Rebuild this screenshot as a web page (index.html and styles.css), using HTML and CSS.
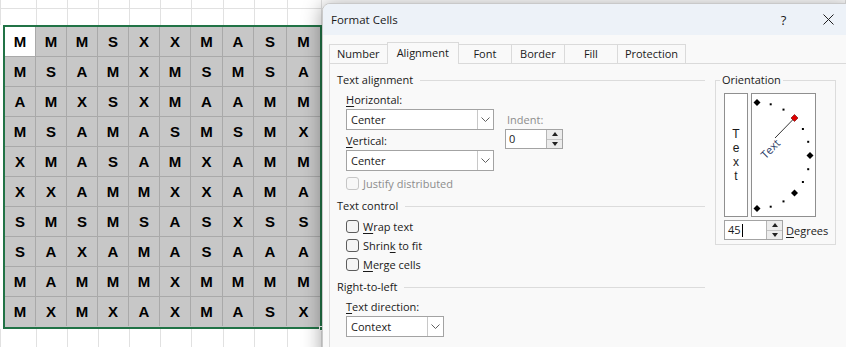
FILE: index.html
```html
<!DOCTYPE html>
<html lang="en">
<head>
    <meta charset="UTF-8">
    <title>Format Cells</title>
    <link rel="stylesheet" href="styles.css">
</head>
<body>
<!--sheet behind the dialog-->
<div id="sheet">
    <!--rows above the range-->
    <div class="sheet_cols sheet_top">
        <span></span><span></span><span></span><span></span><span></span><span></span>
        <span></span><span></span><span></span><span></span><span></span>
    </div>
    <!--selected range-->
    <div id="range">
        <span class="active">M</span><span>M</span><span>M</span><span>S</span><span>X</span><span>X</span><span>M</span><span>A</span><span>S</span><span>M</span>
        <span>M</span><span>S</span><span>A</span><span>M</span><span>X</span><span>M</span><span>S</span><span>M</span><span>S</span><span>A</span>
        <span>A</span><span>M</span><span>X</span><span>S</span><span>X</span><span>M</span><span>A</span><span>A</span><span>M</span><span>M</span>
        <span>M</span><span>S</span><span>A</span><span>M</span><span>A</span><span>S</span><span>M</span><span>S</span><span>M</span><span>X</span>
        <span>X</span><span>M</span><span>A</span><span>S</span><span>A</span><span>M</span><span>X</span><span>A</span><span>M</span><span>M</span>
        <span>X</span><span>X</span><span>A</span><span>M</span><span>M</span><span>X</span><span>X</span><span>A</span><span>M</span><span>A</span>
        <span>S</span><span>M</span><span>S</span><span>M</span><span>S</span><span>A</span><span>S</span><span>X</span><span>S</span><span>S</span>
        <span>S</span><span>A</span><span>X</span><span>A</span><span>M</span><span>A</span><span>S</span><span>A</span><span>A</span><span>A</span>
        <span>M</span><span>A</span><span>M</span><span>M</span><span>M</span><span>X</span><span>M</span><span>M</span><span>M</span><span>M</span>
        <span>M</span><span>X</span><span>M</span><span>X</span><span>A</span><span>X</span><span>M</span><span>A</span><span>S</span><span>X</span>
        <i class="fill_handle"></i>
    </div>
    <!--rows below the range-->
    <div class="sheet_cols sheet_bottom">
        <span></span><span></span><span></span><span></span><span></span><span></span>
        <span></span><span></span><span></span><span></span><span></span>
    </div>
</div>

<!--Format Cells dialog-->
<div id="dialog">
    <div class="dialog_title">
        <span class="title_text">Format Cells</span>
        <span class="title_btn">?</span>
        <span class="title_btn">
            <svg width="11" height="11" viewBox="0 0 11 11"><path d="M0.5 0.5 L10.5 10.5 M10.5 0.5 L0.5 10.5" stroke="#1f1f1f" stroke-width="1"/></svg>
        </span>
    </div>

    <!--tabs-->
    <div class="tabs">
        <span class="tab">Number</span>
        <span class="tab current">Alignment</span>
        <span class="tab">Font</span>
        <span class="tab">Border</span>
        <span class="tab">Fill</span>
        <span class="tab">Protection</span>
    </div>

    <div class="panel">
        <!--left column-->
        <div class="left_col">
            <div class="group_head">Text alignment</div>
            <div class="align_row">
                <div class="align_main">
                    <div class="label"><u>H</u>orizontal:</div>
                    <div class="combo combo_wide">
                        <span class="combo_text">Center</span>
                        <span class="combo_btn"><svg width="9" height="5" viewBox="0 0 9 5"><path d="M0.5 0.5 L4.5 4.5 L8.5 0.5" fill="none" stroke="#606060"/></svg></span>
                    </div>
                    <div class="label label_gap"><u>V</u>ertical:</div>
                    <div class="combo combo_wide">
                        <span class="combo_text">Center</span>
                        <span class="combo_btn"><svg width="9" height="5" viewBox="0 0 9 5"><path d="M0.5 0.5 L4.5 4.5 L8.5 0.5" fill="none" stroke="#606060"/></svg></span>
                    </div>
                </div>
                <div class="indent">
                    <div class="label disabled">Indent:</div>
                    <div class="spin spin_indent">
                        <span class="spin_text">0</span>
                        <span class="spin_btns"><i class="up"></i><i class="down"></i></span>
                    </div>
                </div>
            </div>
            <div class="check check_justify disabled"><i class="box"></i>Justify distributed</div>

            <div class="group_head group_gap">Text control</div>
            <div class="check check_first"><i class="box"></i><span><u>W</u>rap text</span></div>
            <div class="check"><i class="box"></i><span>Shrin<u>k</u> to fit</span></div>
            <div class="check"><i class="box"></i><span><u>M</u>erge cells</span></div>

            <div class="group_head group_gap">Right-to-left</div>
            <div class="label label_dir"><u>T</u>ext direction:</div>
            <div class="combo combo_dir">
                <span class="combo_text">Context</span>
                <span class="combo_btn"><svg width="9" height="5" viewBox="0 0 9 5"><path d="M0.5 0.5 L4.5 4.5 L8.5 0.5" fill="none" stroke="#606060"/></svg></span>
            </div>
        </div>

        <!--orientation-->
        <fieldset class="orientation">
            <legend>Orientation</legend>
            <div class="orient_boxes">
                <div class="vert_text">
                    <span>T</span><span>e</span><span>x</span><span>t</span>
                </div>
                <div class="dial">
                    <svg width="63" height="122" viewBox="0 0 63 122">
                        <polygon points="5,5 8.5,8.5 5,12 1.5,8.5" fill="#000"/>
                        <rect x="17.7" y="9.3" width="2" height="2" fill="#000"/>
                        <rect x="30.5" y="14.6" width="2" height="2" fill="#000"/>
                        <rect x="49.9" y="34" width="2" height="2" fill="#000"/>
                        <rect x="55.2" y="46.8" width="2" height="2" fill="#000"/>
                        <polygon points="58,58 61.5,61.5 58,65 54.5,61.5" fill="#000"/>
                        <rect x="55.2" y="74.2" width="2" height="2" fill="#000"/>
                        <rect x="49.9" y="87" width="2" height="2" fill="#000"/>
                        <polygon points="42.5,95.5 46,99 42.5,102.5 39,99" fill="#000"/>
                        <rect x="30.5" y="106.4" width="2" height="2" fill="#000"/>
                        <rect x="17.7" y="111.7" width="2" height="2" fill="#000"/>
                        <polygon points="5,111 8.5,114.5 5,118 1.5,114.5" fill="#000"/>
                        <line x1="42.5" y1="24" x2="23" y2="44" stroke="#000" stroke-width="0.8"/>
                        <polygon points="42.5,20.5 46,24 42.5,27.5 39,24" fill="#e00000" stroke="#600" stroke-width="0.6"/>
                        <text x="18" y="54.5" transform="rotate(-45 18 54.5)" text-anchor="middle" dominant-baseline="central" class="dial_text">Text</text>
                    </svg>
                </div>
            </div>
            <div class="degrees_row">
                <div class="spin spin_deg">
                    <span class="spin_text">45<i class="caret"></i></span>
                    <span class="spin_btns"><i class="up"></i><i class="down"></i></span>
                </div>
                <span class="deg_label"><u>D</u>egrees</span>
            </div>
        </fieldset>
    </div>
</div>
</body>
</html>
```

FILE: styles.css
```css
*{
    margin: 0;
    padding: 0;
    box-sizing: border-box;
}
body
{
    width: 846px;
    height: 347px;
    overflow: hidden;
    position: relative;
    background: #fff;
    font-family: "Open Sans", "Noto Sans", sans-serif;
    font-size: 11px;
    color: #1a1a1a;
}
u
{
    text-decoration: underline;
    text-underline-offset: 2px;
}

/* sheet */
#sheet
{
    height: 347px;
    display: flex;
    flex-direction: column;
}
.sheet_cols
{
    display: grid;
    grid-template-columns: 36px 31px 31px 31px 31px 31px 32px 31px 33px 34px 1fr;
    border-left: 1px solid #e1e1e1;
}
.sheet_cols span
{
    border-right: 1px solid #e1e1e1;
}
.sheet_top
{
    height: 25px;
    background: linear-gradient(#e1e1e1, #e1e1e1) 0 8px / 100% 1px no-repeat;
}
.sheet_bottom
{
    flex: 1;
}
#range
{
    position: relative;
    width: 319px;
    margin-left: 3px;
    border: 2px solid #217346;
    display: grid;
    grid-template-columns: 31px 31px 31px 31px 31px 31px 32px 31px 33px 33px;
    grid-auto-rows: 30px;
    background: #c7c7c7;
    font-family: "Liberation Sans", Arial, sans-serif;
    font-weight: bold;
    font-size: 15px;
    color: #000;
}
#range span
{
    display: flex;
    align-items: center;
    justify-content: center;
    border-right: 1px solid #a9a9a9;
    border-bottom: 1px solid #a9a9a9;
}
#range span:nth-child(10n)
{
    border-right: none;
}
#range span:nth-child(n+91)
{
    border-bottom: none;
    height: 29px;
}
#range .active
{
    background: #fff;
}
.fill_handle
{
    position: absolute;
    right: -4px;
    bottom: -4px;
    width: 5px;
    height: 5px;
    background: #217346;
    border: 1px solid #fff;
}

/* dialog */
#dialog
{
    position: absolute;
    left: 322px;
    top: 3px;
    width: 530px;
    height: 360px;
    background: #f9f9f9;
    border: 1px solid #c9c9c9;
    border-radius: 8px 0 0 0;
    box-shadow: 0 2px 20px rgba(0, 0, 0, 0.38);
    display: flex;
    flex-direction: column;
}
.dialog_title
{
    height: 31px;
    background: #edf2f8;
    border-radius: 7px 0 0 0;
    display: flex;
    align-items: center;
    padding-left: 8px;
    font-size: 11.5px;
}
.title_text
{
    flex: 1;
}
.title_btn
{
    width: 45px;
    height: 31px;
    display: flex;
    align-items: center;
    justify-content: center;
    font-size: 13px;
}
.tabs
{
    display: flex;
    align-items: flex-end;
    padding: 7px 0 0 6px;
    height: 28px;
}
.tab
{
    height: 19px;
    line-height: 17px;
    padding: 0 7px;
    min-width: 54px;
    text-align: center;
    border: 1px solid #dadada;
    border-bottom: none;
    margin-right: -1px;
    background: #f9f9f9;
}
.tab.current
{
    height: 22px;
    line-height: 19px;
    margin-bottom: -1px;
    position: relative;
    z-index: 1;
    padding: 0 9px;
}
.panel
{
    flex: 1;
    margin-left: 6px;
    border-top: 1px solid #dadada;
    border-left: 1px solid #dadada;
    padding: 8px 0 0 7px;
    display: flex;
    align-items: flex-start;
}
.left_col
{
    width: 368px;
    display: flex;
    flex-direction: column;
}
.group_head
{
    height: 16px;
    line-height: 16px;
    display: flex;
    align-items: center;
}
.group_head::after
{
    content: "";
    flex: 1;
    border-top: 1px solid #dcdcdc;
    margin-left: 7px;
}
.group_gap
{
    margin-top: 7px;
}
.label
{
    height: 16px;
    line-height: 16px;
    padding-left: 9px;
}
.label_gap
{
    margin-top: 3px;
}
.disabled
{
    color: #8d8d8d;
}
.align_row
{
    display: flex;
    margin-top: 4px;
}
.align_main
{
    display: flex;
    flex-direction: column;
}
.combo
{
    height: 21px;
    margin: 1px 0 0 9px;
    background: #fff;
    border: 1px solid #a3a3a3;
    display: flex;
}
.combo_wide
{
    width: 148px;
}
.combo_dir
{
    width: 98px;
}
.combo_text
{
    flex: 1;
    line-height: 19px;
    padding-left: 4px;
}
.combo_btn
{
    width: 16px;
    border-left: 1px solid #c8c8c8;
    display: flex;
    align-items: center;
    justify-content: center;
}
.indent
{
    margin-left: 11px;
    padding-top: 20px;
    display: flex;
    flex-direction: column;
}
.indent .label
{
    padding-left: 2px;
}
.spin
{
    height: 20px;
    background: #fff;
    border: 1px solid #a3a3a3;
    display: flex;
}
.spin_indent
{
    width: 58px;
    margin-top: 1px;
}
.spin_text
{
    flex: 1;
    line-height: 18px;
    padding-left: 3px;
    display: flex;
    align-items: center;
}
.spin_btns
{
    width: 16px;
    border-left: 1px solid #b5b5b5;
    background: #ececec;
    display: flex;
    flex-direction: column;
}
.spin_btns i
{
    flex: 1;
    display: flex;
    align-items: center;
    justify-content: center;
}
.spin_btns .up
{
    border-bottom: 1px solid #c4c4c4;
}
.spin_btns .up::after
{
    content: "";
    border-left: 3px solid transparent;
    border-right: 3px solid transparent;
    border-bottom: 4px solid #222;
}
.spin_btns .down::after
{
    content: "";
    border-left: 3px solid transparent;
    border-right: 3px solid transparent;
    border-top: 4px solid #222;
}
.caret
{
    width: 1px;
    height: 13px;
    background: #000;
    margin-left: 1px;
}
.check
{
    height: 16px;
    display: flex;
    align-items: center;
    padding-left: 9px;
    margin-top: 3px;
}
.check .box
{
    width: 13px;
    height: 13px;
    border: 1px solid #5c5c5c;
    border-radius: 3px;
    background: #f4f4f4;
    margin-right: 4px;
}
.check.disabled .box
{
    border-color: #c6c6c6;
    background: #f7f7f7;
}
.check_justify
{
    margin-top: 4px;
}
.check_first
{
    margin-top: 4px;
}
.label_dir
{
    margin-top: 4px;
}

/* orientation */
.orientation
{
    width: 121px;
    margin-left: 10px;
    border: 1px solid #dcdcdc;
    padding: 0 0 4px 8px;
}
.orientation legend
{
    margin-left: -4px;
    padding: 0 2px;
    line-height: 16px;
}
.orient_boxes
{
    display: flex;
    margin-top: 5px;
}
.vert_text
{
    width: 24px;
    height: 124px;
    border: 1px solid #8f8f8f;
    background: #fff;
    display: flex;
    flex-direction: column;
    align-items: center;
    justify-content: center;
    font-family: "Liberation Sans", Arial, sans-serif;
    font-size: 12px;
    line-height: 14px;
}
.dial
{
    width: 65px;
    height: 124px;
    margin-left: 3px;
    border: 1px solid #8f8f8f;
    background: #fff;
}
.dial svg
{
    display: block;
}
.dial_text
{
    font-family: "Open Sans", "Noto Sans", sans-serif;
    font-size: 11px;
    fill: #1f3864;
}
.degrees_row
{
    display: flex;
    align-items: center;
    margin-top: 3px;
}
.spin_deg
{
    width: 59px;
}
.deg_label
{
    margin-left: 3px;
}
```
